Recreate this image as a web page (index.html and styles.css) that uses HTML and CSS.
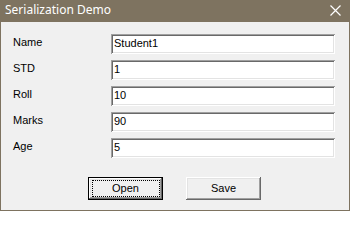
FILE: index.html
```html
<!DOCTYPE html>
<html>
<head>
<meta charset="utf-8">
<link rel="stylesheet" href="styles.css">
</head>
<body>
<div class="window">
  <div class="titlebar">
    <span class="title">Serialization Demo</span>
    <svg class="close" width="11" height="11" viewBox="0 0 11 11"><path d="M0.5 0.5 L10.5 10.5 M10.5 0.5 L0.5 10.5" stroke="#ffffff" stroke-width="1.2" fill="none"/></svg>
  </div>
  <div class="client">
    <div class="form">
      <label class="label">Name</label><div class="textbox">Student1</div>
      <label class="label">STD</label><div class="textbox">1</div>
      <label class="label">Roll</label><div class="textbox">10</div>
      <label class="label">Marks</label><div class="textbox">90</div>
      <label class="label">Age</label><div class="textbox">5</div>
    </div>
    <div class="buttons">
      <button class="btn default"><span class="focus">Open</span></button>
      <button class="btn">Save</button>
    </div>
  </div>
</div>
</body>
</html>
```
FILE: styles.css
```css
html, body {
  margin: 0;
  padding: 0;
  background: #ffffff;
}
.window {
  width: 350px;
  height: 211px;
  box-sizing: border-box;
  background: #7e7360;
  padding: 0 1px 1px 1px;
  display: flex;
  flex-direction: column;
}
.titlebar {
  height: 22px;
  flex: none;
  display: flex;
  align-items: center;
  justify-content: space-between;
  padding: 0 8px 0 4px;
}
.title {
  font-family: "Noto Sans", "DejaVu Sans", sans-serif;
  font-size: 12px;
  color: #ffffff;
  line-height: 16px;
  margin-top: -2px;
}
.close {
  display: block;
  margin-top: -1px;
}
.client {
  flex: 1;
  background: #f0f0f0;
  padding: 12px 0 0 12px;
  font-family: "Liberation Sans", Arial, sans-serif;
  font-size: 11px;
  color: #000;
  border-bottom: 1px solid #f0f0f0;
}
.form {
  display: grid;
  grid-template-columns: 98px 224px;
  grid-auto-rows: 20px;
  row-gap: 6px;
}
.label {
  line-height: 13px;
  padding-top: 2px;
}
.textbox {
  background: #ffffff;
  box-sizing: border-box;
  height: 20px;
  padding: 3px 3px 0 3px;
  line-height: 13px;
  box-shadow: inset 1px 1px #a0a0a0, inset -1px -1px #ffffff, inset 2px 2px #696969, inset -2px -2px #e3e3e3;
}
.buttons {
  display: flex;
  gap: 23px;
  margin: 19px 0 0 75px;
}
.btn {
  width: 75px;
  height: 23px;
  box-sizing: border-box;
  margin: 0;
  padding: 0;
  border: none;
  background: #f0f0f0;
  font-family: "Liberation Sans", Arial, sans-serif;
  font-size: 11px;
  color: #000;
  line-height: 13px;
  box-shadow: inset -1px -1px #696969, inset 1px 1px #ffffff, inset -2px -2px #a0a0a0, inset 2px 2px #e3e3e3;
}
.btn.default {
  border: 1px solid #000;
  position: relative;
}
.focus::before {
  content: "";
  position: absolute;
  left: 3px;
  top: 2px;
  right: 2px;
  bottom: 2px;
  border: 1px dotted #000;
}
```
